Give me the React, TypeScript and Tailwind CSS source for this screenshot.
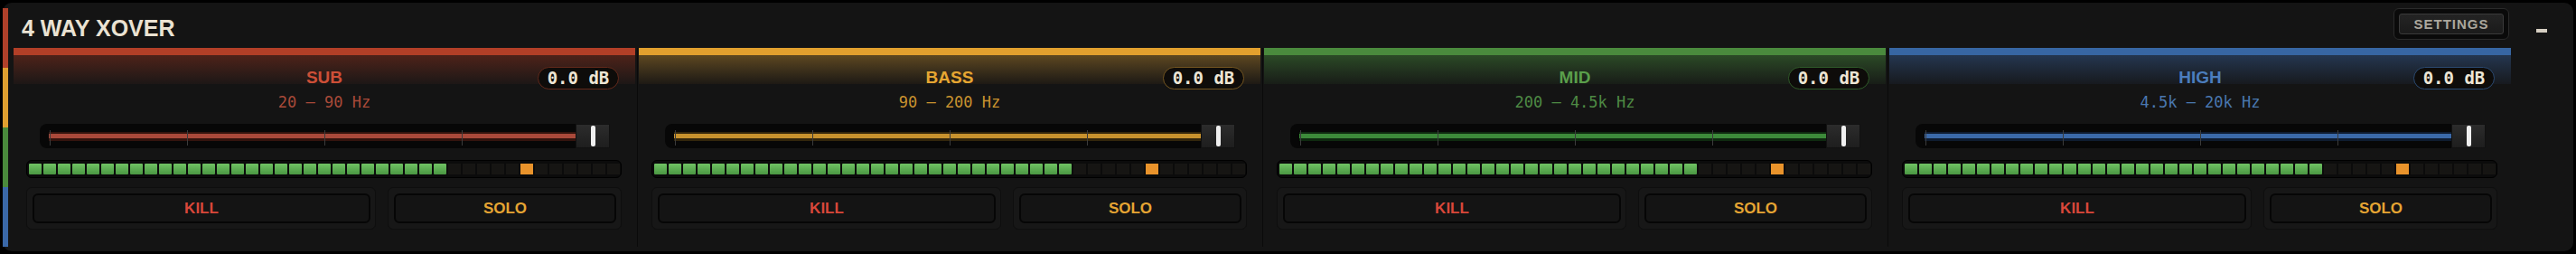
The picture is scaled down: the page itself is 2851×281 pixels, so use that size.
import React from 'react';

type Band = {
  name: string;
  range: string;
  bar: string;
  gradFrom: string;
  gradTo: string;
  nameColor: string;
  rangeColor: string;
  pillBorder: string;
  line: string;
  glow: string;
};

const bands: Band[] = [
  {
    name: 'SUB',
    range: '20 – 90 Hz',
    bar: 'bg-[#b23f27]',
    gradFrom: 'from-[#4e2219]',
    gradTo: 'to-[#1d1716]',
    nameColor: 'text-[#cd4f37]',
    rangeColor: 'text-[#a94a39]',
    pillBorder: 'border-[#62291b]',
    line: 'bg-[#a9493a]',
    glow: 'bg-[#34140e]',
  },
  {
    name: 'BASS',
    range: '90 – 200 Hz',
    bar: 'bg-[#e2a02e]',
    gradFrom: 'from-[#5e4820]',
    gradTo: 'to-[#1e1a14]',
    nameColor: 'text-[#e6a632]',
    rangeColor: 'text-[#c9922f]',
    pillBorder: 'border-[#745621]',
    line: 'bg-[#c8922e]',
    glow: 'bg-[#33260c]',
  },
  {
    name: 'MID',
    range: '200 – 4.5k Hz',
    bar: 'bg-[#4a8a3d]',
    gradFrom: 'from-[#2b4a26]',
    gradTo: 'to-[#181d17]',
    nameColor: 'text-[#5a9f4b]',
    rangeColor: 'text-[#4e8a44]',
    pillBorder: 'border-[#2f5a29]',
    line: 'bg-[#3d8a3a]',
    glow: 'bg-[#0f2a10]',
  },
  {
    name: 'HIGH',
    range: '4.5k – 20k Hz',
    bar: 'bg-[#3766a3]',
    gradFrom: 'from-[#243650]',
    gradTo: 'to-[#171a1f]',
    nameColor: 'text-[#4b7dbd]',
    rangeColor: 'text-[#4a78b0]',
    pillBorder: 'border-[#2b4a72]',
    line: 'bg-[#3b69a8]',
    glow: 'bg-[#0f1c30]',
  },
];

const SEGMENTS = 41;
const LIT = 29;
const PEAK = 34;

const Meter: React.FC = () => (
  <div className="mx-[14px] mr-[15px] mt-[13px] h-[20px] rounded-[6px] bg-[#0b0b0b] border border-black flex items-center pl-[2px] gap-[2px]">
    {Array.from({ length: SEGMENTS }).map((_, i) => (
      <div
        key={i}
        className={
          i < LIT
            ? 'w-[14px] h-[12px] rounded-[1px] bg-linear-to-b from-[#70c364] to-[#4a9742]'
            : i === PEAK
            ? 'w-[14px] h-[12px] bg-[#e9932b]'
            : 'w-[14px] h-[12px] bg-[#161513]'
        }
      />
    ))}
  </div>
);

const Slider: React.FC<{ band: Band }> = ({ band }) => (
  <div className="ml-[29px] mr-[28px] mt-[15px] h-[27px] rounded-[8px] bg-[#070707] flex">
    <div className="relative flex-1 pl-[10px] flex items-center">
      <div className={`w-full h-[10px] ${band.glow} flex items-center`}>
        <div className={`w-full h-[5px] ${band.line}`} />
      </div>
      <div className="absolute left-[11px] top-[7px] w-px h-[17px] bg-[#3b3b3b]" />
      <div className="absolute left-[163px] top-[7px] w-px h-[17px] bg-[#3b3b3b]" />
      <div className="absolute left-[315px] top-[7px] w-px h-[17px] bg-[#3b3b3b]" />
      <div className="absolute left-[467px] top-[7px] w-px h-[17px] bg-[#3b3b3b]" />
    </div>
    <div className="w-[38px] h-full bg-linear-to-b from-[#2c2c2c] to-[#1e1e1e] border border-[#111] flex justify-center py-px">
      <div className="w-[5px] h-full rounded-[2px] bg-[#f0f0f0]" />
    </div>
  </div>
);

const Buttons: React.FC = () => (
  <div className="ml-[14px] mr-[15px] mt-[10px] flex gap-[13px] h-[47px]">
    <div className="w-[387px] rounded-[6px] bg-[#171717] border border-[#0e0e0e] pl-[6px] pr-[5px] pt-[6px] pb-[6px]">
      <div className="h-full rounded-[6px] border-2 border-[#060606] bg-[#141414] flex items-center justify-center text-[17px] font-bold text-[#d9473a] leading-none">
        KILL
      </div>
    </div>
    <div className="flex-1 rounded-[6px] bg-[#171717] border border-[#0e0e0e] pl-[6px] pr-[5px] pt-[6px] pb-[6px]">
      <div className="h-full rounded-[6px] border-2 border-[#060606] bg-[#141414] flex items-center justify-center text-[17px] font-bold text-[#e6a533] leading-none">
        SOLO
      </div>
    </div>
  </div>
);

const BandColumn: React.FC<{ band: Band }> = ({ band }) => (
  <div className="relative flex-1 flex flex-col">
    <div className={`h-[8px] ${band.bar}`} />
    <div className={`h-[32px] bg-linear-to-b ${band.gradFrom} ${band.gradTo} flex justify-center pt-[15px]`}>
      <span className={`text-[19px] font-bold leading-none ${band.nameColor}`}>{band.name}</span>
    </div>
    <div
      className={`absolute right-[18px] top-[21px] w-[90px] h-[25px] rounded-full border-[1.5px] ${band.pillBorder} bg-[#0e0c0a] flex items-center justify-center text-[19px] font-bold leading-none text-[#ede5d5] [font-family:'DejaVu_Sans_Mono',monospace]`}
    >
      0.0 dB
    </div>
    <div
      className={`mt-[12px] text-center text-[17px] leading-none ${band.rangeColor} [font-family:'DejaVu_Sans_Mono',monospace]`}
    >
      {band.range}
    </div>
    <Slider band={band} />
    <Meter />
    <Buttons />
  </div>
);

const Divider: React.FC = () => (
  <div className="w-[4px] flex justify-center">
    <div className="w-px h-full bg-[#0a0a0a]" />
  </div>
);

export default function App() {
  return (
    <div className="w-[2851px] h-[281px] bg-black pl-[3px] pt-[3px] pr-[3px] pb-[3px] [font-family:'Liberation_Sans',Arial,sans-serif]">
      <div className="h-full rounded-[10px] bg-[#141414] flex">
        <div className="w-[6px] mt-[6px] mb-[5px] flex flex-col">
          <div className="flex-1 bg-[#b0402a]" />
          <div className="flex-1 bg-[#e0a030]" />
          <div className="flex-1 bg-[#4a8a3c]" />
          <div className="flex-1 bg-[#3a68a8]" />
        </div>
        <div className="flex-1 flex flex-col pl-[6px]">
          <div className="h-[50px] flex items-start pl-[9px] pr-[29px]">
            <h1 className="mt-[16px] text-[25px] font-bold leading-none text-[#eae2d2]">4 WAY XOVER</h1>
            <div className="flex-1" />
            <div className="mt-[6px] w-[128px] h-[35px] rounded-[6px] bg-[#0a0a0a] border border-[#2a2a2a] p-[5px]">
              <div className="h-full rounded-[3px] border border-[#3a3a3a] bg-linear-to-b from-[#242424] to-[#1b1b1b] flex items-center justify-center text-[15px] font-bold tracking-[1px] leading-none text-[#aba79d]">
                SETTINGS
              </div>
            </div>
            <div className="ml-[30px] mt-[29px] w-[12px] h-[4px] bg-[#d6cfc2]" />
          </div>
          <div className="h-[220px] flex pr-[69px]">
            <BandColumn band={bands[0]} />
            <Divider />
            <BandColumn band={bands[1]} />
            <Divider />
            <BandColumn band={bands[2]} />
            <Divider />
            <BandColumn band={bands[3]} />
          </div>
        </div>
      </div>
    </div>
  );
}
